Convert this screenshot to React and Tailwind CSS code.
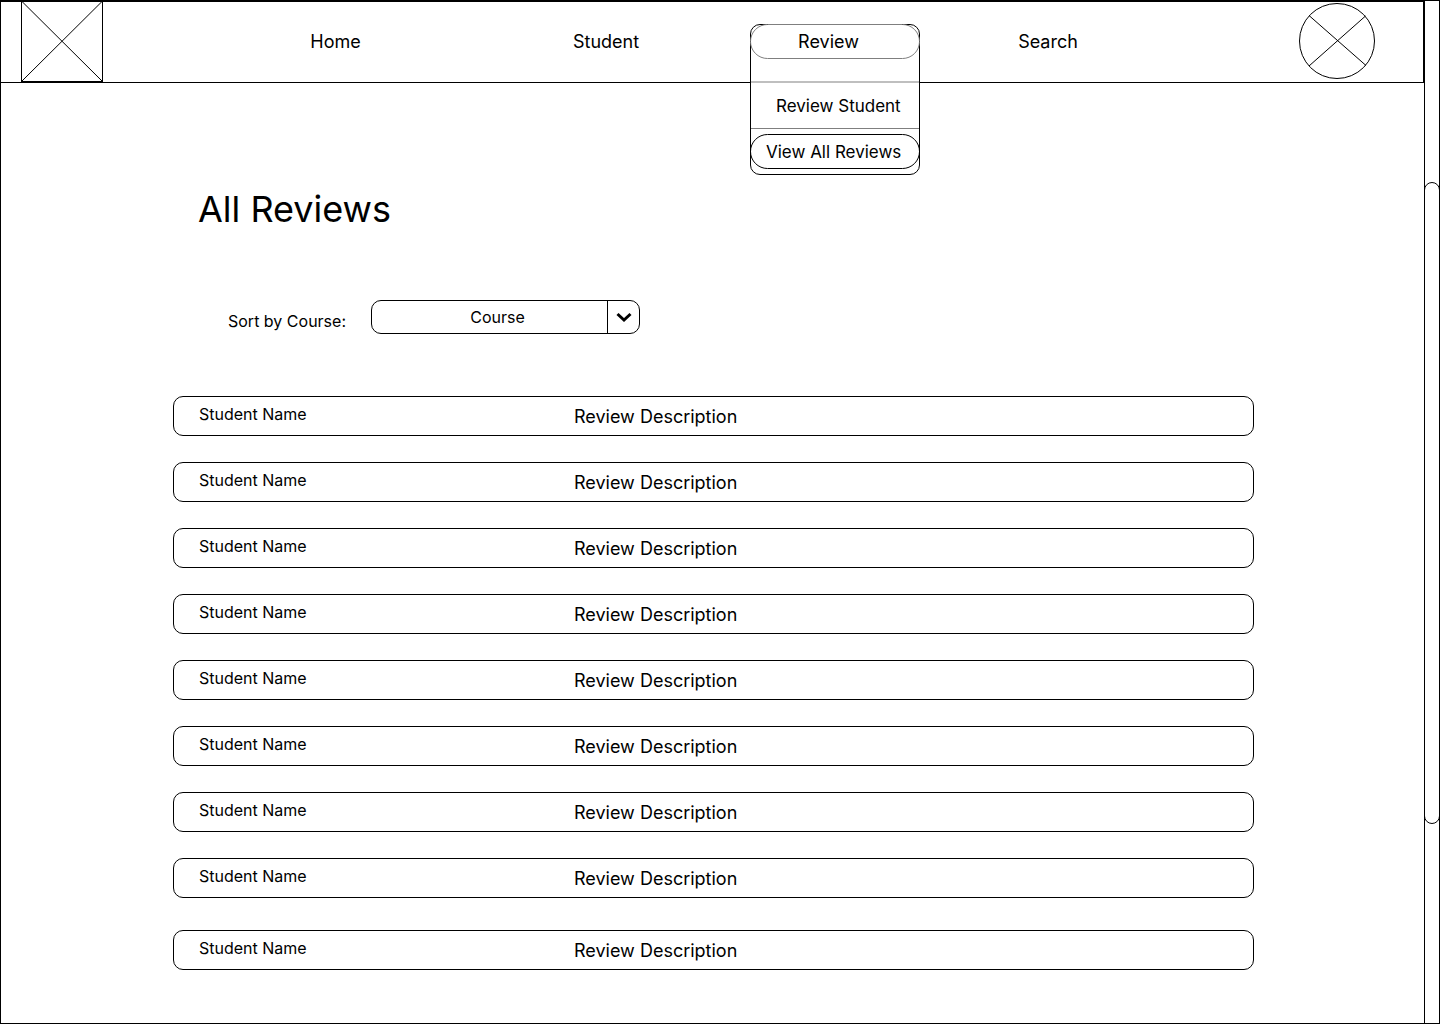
const reviews = Array.from({ length: 9 }, (_, i) => ({
  id: i + 1,
  student: "Student Name",
  description: "Review Description",
}));

function Logo() {
  return (
    <a href="#home" aria-label="Home page" className="block h-20 w-[82px] shrink-0 border-x border-b border-black">
      <svg className="block h-full w-full" viewBox="0 0 80 79" preserveAspectRatio="none" fill="none" stroke="black" aria-hidden="true">
        <path d="M0 -0.5L80 79M80 -0.5L0 79" />
      </svg>
    </a>
  );
}

function Avatar() {
  return (
    <button type="button" aria-label="Profile" className="mt-px block size-[76px] shrink-0 self-start rounded-full">
      <svg className="block" width="76" height="76" viewBox="0 0 76 76" fill="none" stroke="black" aria-hidden="true">
        <circle cx="38" cy="38" r="37.5" />
        <path d="M10 12.5L67 62.5M66.5 13L10 63" />
      </svg>
    </button>
  );
}

function ReviewMenu() {
  return (
    <div className="relative z-10 col-start-4 h-9 self-start pt-[22px]">
      <div className="absolute inset-x-0 top-[22px] rounded-[10px] border border-black bg-white">
        <button
          type="button"
          aria-expanded="true"
          className="-mx-px -mt-px block h-[35px] w-[170px] rounded-full border border-[#7f7f7f] pr-[13px] text-center text-lg leading-8"
        >
          Review
        </button>
        <div className="mt-[22px] border-t-2 border-[#bfbfbf]">
          <a href="#review-student" className="block h-[45px] pl-[25px] text-[17px] leading-[47px] whitespace-nowrap">
            Review Student
          </a>
        </div>
        <div className="border-t border-[#7f7f7f] py-[5px]">
          <a
            href="#all-reviews"
            aria-current="page"
            className="-mx-px block h-[35px] rounded-full border border-black pl-[15px] text-[17px] leading-[35px] whitespace-nowrap"
          >
            View All Reviews
          </a>
        </div>
      </div>
    </div>
  );
}

function Header() {
  return (
    <header className="flex border-y border-r border-black pr-12 pl-5">
      <Logo />
      <nav className="grid flex-1 grid-cols-[465fr_76fr_106fr_170px_256fr_123fr] items-center text-lg">
        <a href="#home" className="justify-self-center">Home</a>
        <a href="#student" className="justify-self-center">Student</a>
        <ReviewMenu />
        <a href="#search" className="justify-self-center">Search</a>
      </nav>
      <Avatar />
    </header>
  );
}

function CourseFilter() {
  return (
    <form className="mt-[67px] flex items-start pl-[55px]">
      <label htmlFor="course" className="w-[143px] pt-[9px] text-base leading-6">
        Sort by Course:
      </label>
      <div className="relative h-[34px] w-[269px]">
        <select
          id="course"
          className="h-full w-full appearance-none rounded-[10px] border border-black bg-white pr-8 pl-4 text-base [text-align-last:center]"
        >
          <option>Course</option>
        </select>
        <span className="pointer-events-none absolute inset-y-0 right-0 flex w-[33px] items-center justify-center border-l border-black">
          <svg width="16" height="12" viewBox="0 0 16 12" fill="none" stroke="black" strokeWidth="3" aria-hidden="true">
            <path d="M1.5 3L8 9L14.5 3" />
          </svg>
        </span>
      </div>
    </form>
  );
}

function ReviewList() {
  return (
    <ul className="mt-[62px] flex flex-col gap-[26px]">
      {reviews.map((review) => (
        <li key={review.id} className="flex h-10 items-start rounded-[10px] border border-black pl-[25px] last:mt-1.5">
          <span className="w-[375px] text-base leading-[34px]">{review.student}</span>
          <span className="text-lg leading-10">{review.description}</span>
        </li>
      ))}
    </ul>
  );
}

export default function App() {
  return (
    <div className="flex min-h-screen border border-black bg-white font-[Inter,sans-serif] text-black">
      <div className="flex-1">
        <Header />
        <main className="pt-[102px] pr-[170px] pb-12 pl-[172px]">
          <h1 className="pl-[25px] text-4xl leading-12">All Reviews</h1>
          <CourseFilter />
          <ReviewList />
        </main>
      </div>
      <div className="w-[15px] border-l border-black" aria-hidden="true">
        <div className="-mx-px mt-[181px] h-[642px] rounded-full border border-black" />
      </div>
    </div>
  );
}
